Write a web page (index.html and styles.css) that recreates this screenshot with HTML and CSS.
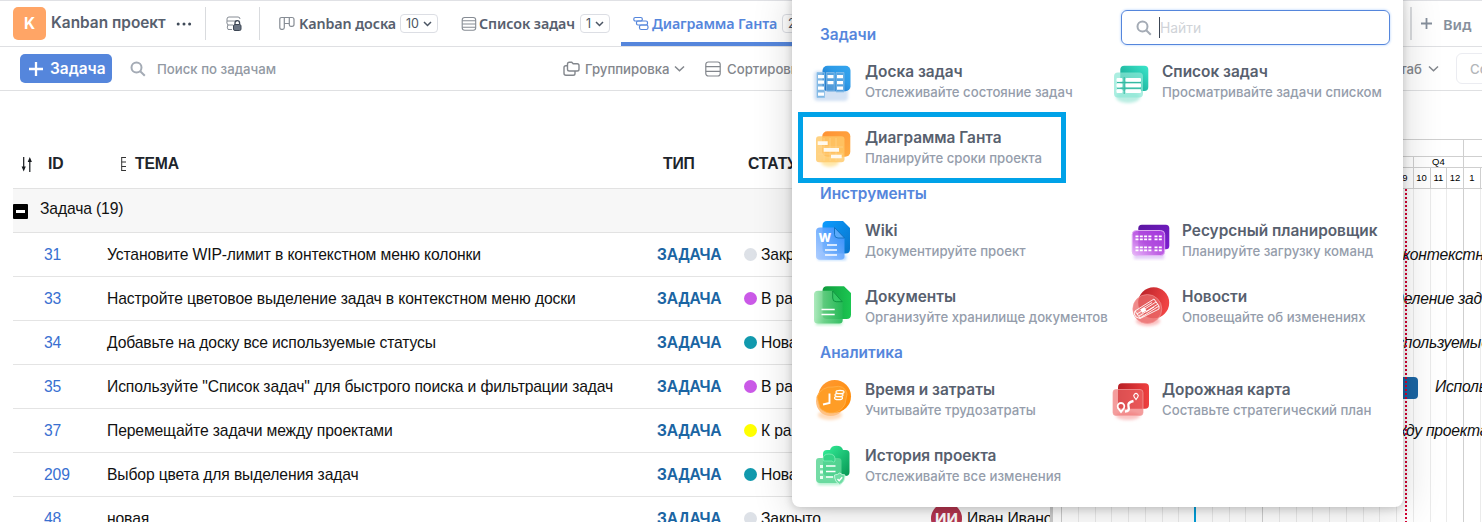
FILE: index.html
```html
<!DOCTYPE html>
<html lang="ru">
<head>
<meta charset="utf-8">
<title>Kanban проект</title>
<link rel="stylesheet" href="styles.css">
</head>
<body>
<div class="app">
  <header class="topbar">
    <div class="project">
      <span class="project-logo">K</span>
      <span class="project-name">Kanban проект</span>
      <svg class="dots" width="16" height="6" viewBox="0 0 16 6"><g fill="#3f4a58"><circle cx="2.2" cy="3" r="1.5"/><circle cx="8" cy="3" r="1.5"/><circle cx="13.6" cy="3" r="1.5"/></g></svg>
    </div>
    <div class="lock">
      <svg width="16" height="16" viewBox="0 0 16 16" fill="none" stroke="#868c94"><path d="M1 5V3q0-2 2-2h9q2 0 2 2M1 5h10M1 5q-.8 2 1 4M1.5 9H7M2 9q-1.500 2 0 4.500H6"/><path d="M9 8.500V7a2.300 2.300 0 0 1 4.600 0v1.500" stroke="#3d4654" stroke-width="1.300"/><rect x="7.500" y="8.500" width="7.500" height="6" rx="1.500" fill="#6b7482" stroke="#3d4654"/></svg>
    </div>
    <nav class="tabs">
      <div class="tab">
        <svg width="16" height="16" viewBox="0 0 16 16" fill="none" stroke="#868c94" stroke-width="1.200"><path d="M2.500 1.500H13q2 0 2 2v5q0 1.800-2 1.800h-1.200q-1.500 0-1.500-1.500V2M5.300 2v9.500q0 1.800-1.700 1.800H2.600q-1.800 0-1.800-1.800V3.200q0-1.700 1.700-1.700M5.300 7.500h5"/></svg>
        <span class="tab-name">Kanban доска</span>
        <span class="badge">10 <svg width="9" height="6" viewBox="0 0 9 6"><path d="M1 1l3.500 3.500L8 1"/></svg></span>
      </div>
      <div class="tab tab-list">
        <svg width="16" height="16" viewBox="0 0 16 16" fill="none" stroke="#868c94" stroke-width="1.100"><rect x="1.200" y="1.500" width="13.500" height="12.800" rx="2.500"/><path d="M1.200 4.800h13.500M1.200 8h13.500M1.200 11.200h13.500"/></svg>
        <span class="tab-name">Список задач</span>
        <span class="badge">1 <svg width="9" height="6" viewBox="0 0 9 6"><path d="M1 1l3.500 3.500L8 1"/></svg></span>
      </div>
      <div class="tab tab-active">
        <svg width="16" height="16" viewBox="0 0 16 16" fill="none" stroke="#5586dc" stroke-width="1.200"><rect x=".8" y="1.500" width="8.500" height="3.500" rx="1.500"/><rect x="3.500" y="5" width="11" height="4" rx="1.500"/><rect x="6.500" y="9" width="8.500" height="4.500" rx="1.800"/></svg>
        <span class="tab-name">Диаграмма Ганта</span>
        <span class="badge">2 <svg width="9" height="6" viewBox="0 0 9 6"><path d="M1 1l3.500 3.500L8 1"/></svg></span>
      </div>
    </nav>
    <div class="add-view">
      <svg width="11" height="11" viewBox="0 0 11 11" stroke="#868f9c" stroke-width="1.800"><path d="M5.500 0v11M0 5.500h11"/></svg>
      <span>Вид</span>
    </div>
  </header>

  <div class="toolbar">
    <button class="new-task"><svg width="16" height="16" viewBox="0 0 16 16" stroke="#fff" stroke-width="2.300"><path d="M8 1v14M1 8h14"/></svg>Задача</button>
    <svg class="glass" width="16" height="16" viewBox="0 0 16 16" fill="none" stroke="#a4abb5" stroke-width="2"><circle cx="6.500" cy="6.500" r="5"/><path d="M10.200 10.200l4.600 4.600"/></svg>
    <span class="search-label">Поиск по задачам</span>
    <div class="tool tool-group">
      <svg width="17" height="16" viewBox="0 0 17 16" fill="none" stroke="#83878d" stroke-width="1.400"><path d="M4.500 3q0-1.800 1.800-1.800h2.400l1.500 1.600h4q1.800 0 1.800 1.800V8.200q0 1.800-1.800 1.800H6.300q-1.800 0-1.800-1.800zM4 4.700H2.800Q1 4.700 1 6.500v5.800q0 2 2 2h7.200q1.800 0 1.800-1.800V10.500"/></svg>
      <span>Группировка</span>
      <svg width="11" height="8" viewBox="0 0 11 8" fill="none" stroke="#83878d" stroke-width="1.500"><path d="M1 1.500l4.500 4.300L10 1.500"/></svg>
    </div>
    <div class="tool tool-sort">
      <svg width="16" height="16" viewBox="0 0 16 16" fill="none" stroke="#83878d" stroke-width="1.200"><rect x=".8" y="1" width="14.400" height="14" rx="2.500"/><path d="M.8 5.700h14.400M.8 10.300h14.400"/></svg>
      <span>Сортировка</span>
    </div>
    <div class="tool tool-scale">
      <span>Масштаб</span>
      <svg width="11" height="8" viewBox="0 0 11 8" fill="none" stroke="#83878d" stroke-width="1.500"><path d="M1 1.500l4.500 4.300L10 1.500"/></svg>
    </div>
    <button class="save">Сохранить</button>
  </div>

  <main class="content">
    <section class="table">
      <div class="thead">
        <svg class="sort" width="12" height="17" viewBox="0 0 12 17" stroke="#16191d" fill="#16191d"><path d="M2.700 1v11M8.800 16V5" stroke-width="1.200"/><path d="M.6 10.500h4.200L2.700 15.500zM6.700 6h4.200L8.800 1z" stroke="none"/></svg>
        <span class="h-id">ID</span>
        <svg class="drag" width="5" height="16" viewBox="0 0 5 16" fill="none" stroke="#333"><path d="M.7 1v14M.7 1.500H5M.7 6H5M.7 10.500H5M.7 14.500H5"/></svg>
        <span class="h-subject">ТЕМА</span>
        <span class="h-type">ТИП</span>
        <span class="h-status">СТАТУС</span>
      </div>
      <div class="group"><span class="collapse"></span>Задача (19)</div>
      <div class="row"><a>31</a><span>Установите WIP-лимит в контекстном меню колонки</span><b>ЗАДАЧА</b><i class="dot closed"></i><em>Закрыто</em></div>
      <div class="row"><a>33</a><span>Настройте цветовое выделение задач в контекстном меню доски</span><b>ЗАДАЧА</b><i class="dot work"></i><em>В работе</em></div>
      <div class="row"><a>34</a><span>Добавьте на доску все используемые статусы</span><b>ЗАДАЧА</b><i class="dot new"></i><em>Новая</em></div>
      <div class="row"><a>35</a><span>Используйте "Список задач" для быстрого поиска и фильтрации задач</span><b>ЗАДАЧА</b><i class="dot work"></i><em>В работе</em></div>
      <div class="row"><a>37</a><span>Перемещайте задачи между проектами</span><b>ЗАДАЧА</b><i class="dot ready"></i><em>К работе</em></div>
      <div class="row"><a>209</a><span>Выбор цвета для выделения задач</span><b>ЗАДАЧА</b><i class="dot new"></i><em>Новая</em></div>
      <div class="row"><a>48</a><span>новая</span><b>ЗАДАЧА</b><i class="dot closed"></i><em>Закрыто</em><span class="avatar">ИИ</span><span class="person">Иван Иванов</span></div>
    </section>
    <div class="splitter"></div>
    <section class="gantt">
      <div class="years"><span></span><span></span><span></span></div>
      <div class="quarters"><span>Q1</span><span>Q2</span><span>Q3</span><span>Q4</span><span>Q1</span><span>Q2</span><span>Q3</span><span>Q4</span><span>Q1</span></div>
      <div class="months"><span>1</span><span>2</span><span>3</span><span>4</span><span>5</span><span>6</span><span>7</span><span>8</span><span>9</span><span>10</span><span>11</span><span>12</span><span>1</span><span>2</span><span>3</span><span>4</span><span>5</span><span>6</span><span>7</span><span>8</span><span>9</span><span>10</span><span>11</span><span>12</span><span>1</span><span>2</span></div>
      <div class="chart">
        <div class="lines"><i></i><i></i><i></i><i></i><i></i><i></i><i></i><i></i><i></i><i></i><i></i><i class="year"></i><i></i><i></i><i></i><i></i><i></i><i></i><i></i><i></i><i></i><i></i><i></i><i class="year"></i><i></i><i></i></div>
        <div class="label label-31">Установите WIP-лимит в контекстном меню колонки</div>
        <div class="label label-33">Настройте цветовое выделение задач</div>
        <div class="label label-34">Добавьте на доску все используемые статусы</div>
        <div class="label label-35"><span class="bar"></span>Используйте "Список задач"</div>
        <div class="label label-37">Перемещайте задачи между проектами</div>
        <div class="start-line"></div>
        <div class="today"></div>
      </div>
    </section>
  </main>

  <aside class="menu">
    <div class="menu-head">
      <h2>Задачи</h2>
      <div class="find">
        <svg width="16" height="16" viewBox="0 0 16 16" fill="none" stroke="#a4abb5" stroke-width="2"><circle cx="6.500" cy="6.500" r="5"/><path d="M10.200 10.200l4.600 4.600"/></svg>
        <span class="caret"></span><span class="hint">Найти</span>
      </div>
    </div>
    <div class="items">
      <div class="item">
        <svg width="48" height="48" viewBox="0 0 48 48">
          <defs><filter id="soft" x="-30%" y="-30%" width="160%" height="160%"><feGaussianBlur stdDeviation="1.800"/></filter>
          <linearGradient id="gb" x1="0" y1="1" x2="1" y2="0"><stop offset="0" stop-color="#1260b8"/><stop offset=".6" stop-color="#2d9be8"/><stop offset="1" stop-color="#35a5ee"/></linearGradient></defs>
          <rect x="4" y="13" width="34" height="30" rx="4" fill="#d3e2f4" filter="url(#soft)"/>
          <rect x="12.500" y="7.700" width="28" height="25.600" rx="5" fill="url(#gb)"/>
          <g fill="#64a8df" fill-opacity=".75" stroke="#8cc0ea" stroke-width=".7"><path d="M7 14.500h7.500v25H7zM16.300 14.500h8v18.500h-8zM26 14.500h8V34h-8z"/></g>
          <g fill="#fff"><path d="M8 17h6v3.300H8zM8 22.500h6v3.300H8zM8 28.500h6v3.300H8zM8 34.500h6v3.300H8zM17.500 17h6v3.300h-6zM17.500 23h6v3.300h-6zM27 17h6v3.300h-6zM27 23h6v3.300h-6zM27 28.500h6v3.300h-6z"/></g>
        </svg>
        <div><h3>Доска задач</h3><p>Отслеживайте состояние задач</p></div>
      </div>
      <div class="item">
        <svg width="48" height="48" viewBox="0 0 48 48">
          <defs><linearGradient id="gl" x1="0" y1="1" x2="1" y2="0"><stop offset="0" stop-color="#0f9a86"/><stop offset="1" stop-color="#3be6cb"/></linearGradient></defs>
          <ellipse cx="21" cy="39" rx="12" ry="6" fill="#b9ede2" filter="url(#soft)"/>
          <rect x="13.300" y="7.700" width="28" height="25.300" rx="4" fill="url(#gl)"/>
          <rect x="7" y="14.500" width="29" height="25" rx="4" fill="#8ce8d5" fill-opacity=".72"/>
          <path d="M17.200 19v17M10 24.500h24M10 30.300h24" stroke="#35b8a2" stroke-width="1"/>
          <g fill="#fff"><rect x="9.500" y="20" width="6" height="3.800" rx="1"/><rect x="18.500" y="20" width="15.500" height="3.800" rx="1"/><rect x="9.500" y="25.500" width="6" height="3.800" rx="1"/><rect x="18.500" y="25.500" width="15.500" height="3.800" rx="1"/><rect x="9.500" y="31.300" width="6" height="3.800" rx="1"/><rect x="18.500" y="31.300" width="15.500" height="3.800" rx="1"/></g>
        </svg>
        <div><h3>Список задач</h3><p>Просматривайте задачи списком</p></div>
      </div>
      <div class="item selected">
        <svg width="48" height="48" viewBox="0 0 48 48">
          <defs><linearGradient id="gg" x1="0" y1="0" x2="1" y2="1"><stop offset="0" stop-color="#ff9233"/><stop offset="1" stop-color="#ffad45"/></linearGradient></defs>
          <ellipse cx="20" cy="38" rx="9" ry="5" fill="#ffe7a8" filter="url(#soft)"/>
          <rect x="12.300" y="7.300" width="28" height="25.500" rx="5" fill="url(#gg)"/>
          <rect x="6" y="12.300" width="28.500" height="26" rx="3" fill="#ffc868" fill-opacity=".82"/>
          <path d="M14 14v23M20 14v23M26 14v23M8 23h25M8 30h25" stroke="#ffd896" stroke-width=".6"/>
          <g fill="#fff9ee"><path d="M7.700 17.300h10V21h-10zM13.700 24H29v3.700H13.700zM21 30.700h10.700v3.600H21z"/></g>
        </svg>
        <div><h3>Диаграмма Ганта</h3><p>Планируйте сроки проекта</p></div>
      </div>
    </div>
    <h2>Инструменты</h2>
    <div class="items items-tools">
      <div class="item">
        <svg width="48" height="48" viewBox="0 0 48 48">
          <defs><linearGradient id="gw" x1="0" y1="0" x2="1" y2="1"><stop offset="0" stop-color="#0c9cff"/><stop offset="1" stop-color="#0873c9"/></linearGradient><linearGradient id="gw2" x1="0" y1="1" x2="1" y2="0"><stop offset="0" stop-color="#a9caff"/><stop offset="1" stop-color="#2f8cff"/></linearGradient></defs>
          <path d="M8 38h28v5H8z" fill="#a9d2ff" filter="url(#soft)"/>
          <path d="M17 4h16l7 7v21q0 4.500-4.500 4.500H17q-4.500 0-4.500-4.500V8.500Q12.500 4 17 4z" fill="url(#gw)"/>
          <path d="M10 10.500h14.500L34.500 21v18q0 3.800-4 3.800H10q-4 0-4-3.800V14.500q0-4 4-4z" fill="url(#gw2)" fill-opacity=".9"/>
          <path d="M24.500 10.500v7q0 3.500 3.500 3.500h6.500z" fill="#5aaafa" stroke="#0867b5" stroke-width=".8"/>
          <text x="8.500" y="25" font-family="Inter, sans-serif" font-size="12" font-weight="800" fill="#fff">W</text>
          <path d="M17 28h10M15 33h12M15 38h12" stroke="#fff" stroke-width="1.700"/>
        </svg>
        <div><h3>Wiki</h3><p>Документируйте проект</p></div>
      </div>
      <div class="item">
        <svg width="48" height="48" viewBox="0 0 48 48">
          <defs><linearGradient id="gr" x1="0" y1="0" x2="1" y2="1"><stop offset="0" stop-color="#5b16a0"/><stop offset="1" stop-color="#7d1ed2"/></linearGradient><linearGradient id="gr2" x1="0" y1="1" x2="1" y2="0"><stop offset="0" stop-color="#e9b4fa"/><stop offset=".45" stop-color="#ba55e2"/><stop offset="1" stop-color="#a638df"/></linearGradient></defs>
          <path d="M7 36h30v6H7z" fill="#e3cdf8" filter="url(#soft)"/>
          <rect x="11.300" y="7.700" width="31" height="24.500" rx="3.500" fill="url(#gr)"/>
          <rect x="5.200" y="13.500" width="32.500" height="25" rx="4" fill="url(#gr2)" fill-opacity=".92" stroke="#e3b5f5" stroke-width=".9"/>
          <path d="M8.500 19.300h16M27.500 19.300h8M8.500 22.300h16M27.500 22.300h8M8.500 30.300h16M27.500 30.300h8M8.500 33.300h16M27.500 33.300h8" stroke="#fff" stroke-width="1.700" stroke-dasharray="3 1.300"/>
        </svg>
        <div><h3>Ресурсный планировщик</h3><p>Планируйте загрузку команд</p></div>
      </div>
      <div class="item">
        <svg width="48" height="48" viewBox="0 0 48 48">
          <defs><linearGradient id="gd" x1="0" y1="0" x2="1" y2="0"><stop offset="0" stop-color="#0f9a3d"/><stop offset="1" stop-color="#1cc651"/></linearGradient><linearGradient id="gd2" x1="0" y1="0" x2="1" y2="0"><stop offset="0" stop-color="#a5e8b6"/><stop offset=".35" stop-color="#65cf83"/><stop offset="1" stop-color="#25b956"/></linearGradient></defs>
          <path d="M6 36h26v6H6z" fill="#b3efc5" filter="url(#soft)"/>
          <path d="M17 3.300h17L41 10v21.500q0 4.500-4.500 4.500H17q-4.500 0-4.500-4.500V8q0-4.700 4.500-4.700z" fill="url(#gd)"/>
          <path d="M8 7.700h14.700l10 11V37q0 3.500-3.500 3.500H8q-4 0-4-3.500V11.500q0-3.800 4-3.800z" fill="url(#gd2)" fill-opacity=".9"/>
          <path d="M22.700 8v7q0 3.700 3.500 3.700h6z" fill="#35c965" stroke="#078838" stroke-width=".8"/>
          <path d="M11.500 26.500h13.200M11.500 31.500h13.200" stroke="#fff" stroke-width="1.700"/>
        </svg>
        <div><h3>Документы</h3><p>Организуйте хранилище документов</p></div>
      </div>
      <div class="item">
        <svg width="48" height="48" viewBox="0 0 48 48">
          <defs><linearGradient id="gn" x1="0" y1="0" x2="1" y2=".3"><stop offset="0" stop-color="#b51f27"/><stop offset="1" stop-color="#f04444"/></linearGradient></defs>
          <ellipse cx="21" cy="38" rx="12" ry="5" fill="#fbc0c0" filter="url(#soft)"/>
          <circle cx="26.700" cy="19.700" r="15.500" fill="url(#gn)"/>
          <circle cx="20.300" cy="26" r="14.500" fill="#ea6a6a" fill-opacity=".78" stroke="#f39a9a" stroke-width=".6"/>
          <g fill="none" stroke="#fff" stroke-width=".9"><path d="M8 28l19-12 5 7-19 12zM8 28q-2 3 1 6l4 1.500L32 26v-3M10 31l19-12M12 33l19-12M17 24.500l8-5M19 29l8-5"/></g>
          <path d="M13 26.500l4-2.500 2.500 3.500-4 2.500z" fill="#fff"/>
        </svg>
        <div><h3>Новости</h3><p>Оповещайте об изменениях</p></div>
      </div>
    </div>
    <h2>Аналитика</h2>
    <div class="items">
      <div class="item">
        <svg width="48" height="48" viewBox="0 0 48 48">
          <defs><linearGradient id="gt" x1="0" y1="0" x2="1" y2="1"><stop offset="0" stop-color="#ff9a35"/><stop offset="1" stop-color="#ff8a00"/></linearGradient></defs>
          <ellipse cx="20" cy="39" rx="12" ry="5" fill="#ffdcbc" filter="url(#soft)"/>
          <circle cx="20.700" cy="25.300" r="14.700" fill="#ffc184"/>
          <circle cx="24.700" cy="20.300" r="16.300" fill="url(#gt)"/>
          <path d="M7 21a15 15 0 0 1 16-10q12-3 14 7-1 5-2 10a15 15 0 0 1-25 4z" fill="#ff9d26" stroke="#ffb34e" stroke-width=".8"/>
          <path d="M19.500 17.500V27L13 28.500" fill="none" stroke="#fff" stroke-width="1.900"/>
          <g fill="#ffa52e" stroke="#fff" stroke-width="1.200"><ellipse cx="28.500" cy="22" rx="4" ry="1.700"/><ellipse cx="29" cy="19" rx="4" ry="1.700"/><ellipse cx="30" cy="16" rx="4" ry="1.700"/></g>
        </svg>
        <div><h3>Время и затраты</h3><p>Учитывайте трудозатраты</p></div>
      </div>
      <div class="item">
        <svg width="48" height="48" viewBox="0 0 48 48">
          <defs><linearGradient id="gm" x1="0" y1="0" x2="1" y2="0"><stop offset="0" stop-color="#b71f24"/><stop offset="1" stop-color="#ef4040"/></linearGradient></defs>
          <ellipse cx="21" cy="40" rx="12" ry="4" fill="#fac4c4" filter="url(#soft)"/>
          <rect x="11" y="7.300" width="31" height="25.500" rx="4" fill="url(#gm)"/>
          <rect x="6" y="13.500" width="30" height="26" rx="3" fill="#ee6868" fill-opacity=".65" stroke="#f3a0a0" stroke-width=".7"/>
          <g fill="none" stroke="#fff"><path d="M14 36l-3-4a3.400 3.400 0 1 1 6 0z" stroke-width="1.800"/><path d="M29 23.500l-1.800-2.500a2.200 2.200 0 1 1 3.600 0z" stroke-width="1.200"/><path d="M18 35.500q5 0 3.500-5-1.500-4 5-5.500" stroke-width="2.400"/></g>
        </svg>
        <div><h3>Дорожная карта</h3><p>Составьте стратегический план</p></div>
      </div>
      <div class="item">
        <svg width="48" height="48" viewBox="0 0 48 48">
          <defs><linearGradient id="gh" x1="0" y1="0" x2="1" y2="1"><stop offset="0" stop-color="#35f29b"/><stop offset="1" stop-color="#079653"/></linearGradient></defs>
          <path d="M8 37h22v6H8z" fill="#aef0cc" filter="url(#soft)"/>
          <path d="M17 8h3q1-4.300 6.500-4.300T33 8h3q3.500 0 3.500 3.500V30q0 4-4 4H17q-4 0-4-4V12q0-4 4-4z" fill="url(#gh)"/>
          <path d="M9 16h4q0-4 6-4t6 4h3q3.500 0 3.500 3v18q0 4-4 4H10q-4 0-4-4V19q0-3 3-3z" fill="#5dd696" fill-opacity=".85"/>
          <path d="M13 17q0-5 6-5t6 5-3 2h-6q-3 1-3-2z" fill="#35d487" stroke="#8cf0bd" stroke-width=".7"/>
          <g fill="#e9fff3"><path d="M10 23h3v3h-3zM10 28.500h3v3h-3zM10 34h3v3h-3z"/></g>
          <path d="M16 24h9.500M16 29.500h9.500M16 35h7" stroke="#fff" stroke-width="1.500"/>
          <path d="M24.500 33q3 0 5.300-2 2.200 2 5.200 2 0 7-5.200 9.500-5.300-2.500-5.300-9.500z" fill="#6fdda4" stroke="#c5f6dc"/>
          <path d="M27.500 37l1.700 1.800 3-3.600" fill="none" stroke="#fff" stroke-width="1.400"/>
        </svg>
        <div><h3>История проекта</h3><p>Отслеживайте все изменения</p></div>
      </div>
    </div>
  </aside>
</div>
</body>
</html>
```
FILE: styles.css
```css
*, *::after { box-sizing: border-box; }
body { margin: 0; font-family: Inter, "Liberation Sans", sans-serif; background: #fff; }
h2, h3, p { margin: 0; }
svg { flex: none; display: block; }
.app { position: relative; width: 1482px; height: 522px; overflow: hidden; }

.topbar { display: flex; height: 47px; border-top: 1px solid #e0e1e5; border-bottom: 1px solid #dfe0e3; white-space: nowrap; }
.project { display: flex; align-items: center; width: 206px; height: 33px; margin-top: 6px; padding-left: 13px; border-right: 1px solid #d9dbde; }
.project-logo { width: 33px; height: 33px; border-radius: 5px; background: #ffa566; color: #fff; font-size: 15.400px; font-weight: 700; line-height: 33px; text-align: center; }
.project-name { width: 125px; margin: -2px 0 0 5px; font-size: 15.400px; font-weight: 600; color: #57606e; }
.lock { width: 54px; height: 33px; margin-top: 6px; padding: 9px 0 0 20px; border-right: 1px solid #d9dbde; }
.tabs { display: flex; height: 45px; }
.tab { display: flex; align-items: center; width: 182px; padding-left: 19px; color: #57606e; }
.tab-name { flex: none; width: 97px; margin-left: 4px; font-family: "Noto Sans", sans-serif; font-size: 14.300px; font-weight: 600; letter-spacing: -.1px; }
.tab-list { width: 179px; }
.tab-list .tab-name { margin-left: 2px; }
.tab-active { width: 190px; padding-left: 12px; color: #5586dc; border-bottom: 4px solid #5586dc; padding-top: 4px; }
.tab-active .tab-name { width: 126px; margin-left: 3px; letter-spacing: -.15px; }
.badge { display: flex; align-items: center; gap: 4px; height: 19px; margin-left: 4px; padding: 0 5px; border: 1px solid #dcdee4; border-radius: 4px; font-size: 12.500px; color: #4b5563; }
.badge path { fill: none; stroke: #4b5563; stroke-width: 1.500; }
.add-view { display: flex; align-items: center; gap: 11px; width: 72px; height: 33px; margin: 6px 0 0 auto; padding-left: 9px; border-left: 2px solid #d9dbde; font-family: "Noto Sans", sans-serif; font-size: 14.600px; font-weight: 600; color: #868f9c; }

.toolbar { display: flex; align-items: center; height: 44px; padding-left: 20px; border-bottom: 1px solid #dfe0e2; font-size: 13.200px; font-weight: 500; white-space: nowrap; }
.new-task { display: flex; align-items: center; gap: 6px; width: 92px; height: 29px; padding: 0 0 0 8px; border: 0; border-radius: 5px; background: #5586dc; color: #fff; font: 600 15.400px Inter, sans-serif; }
.glass { margin-left: 18px; }
.search-label { width: 406px; margin-left: 11px; color: #9299a3; }
.tool { display: flex; align-items: center; color: #83868c; }
.tool-group { width: 142px; }
.tool-group span { width: 84px; margin: 0 5px; }
.tool-sort { gap: 6px; width: 120px; }
.tool-scale { gap: 6px; margin-left: auto; }
.save { width: 120px; height: 31px; margin: 0 -94px 0 17px; padding: 0 0 0 13px; border: 1px solid #ebecf1; border-radius: 6px; background: #fff; color: #b3b6ba; font: 500 13.200px Inter, sans-serif; text-align: left; }

.content { display: flex; height: 431px; font-family: "Liberation Sans", Arial, sans-serif; font-size: 15.700px; line-height: 18px; letter-spacing: -.14px; color: #111; }
.table { width: 1037px; margin-left: 13px; overflow: hidden; white-space: nowrap; }
.thead { display: flex; align-items: center; height: 98px; padding: 49px 0 0 8px; border-bottom: 1px solid #e2e2e2; color: #20242b; font-weight: 700; }
.h-id { width: 73px; margin-left: 15px; }
.drag { margin-right: 9px; }
.h-subject { width: 528px; }
.h-type { width: 85px; }
.group { display: flex; align-items: center; height: 44px; padding-bottom: 3px; background: #f7f7f7; border-bottom: 1px solid #e2e2e2; }
.collapse { width: 15px; height: 15px; margin: 4px 12px 0 0; border: solid #000; border-width: 6px 3px; background: #fff; border-radius: 1px; }
.row { display: flex; align-items: center; height: 44px; padding-left: 31px; border-bottom: 1px solid #e4e4e4; }
.row > * { flex: none; }
.row a { width: 63px; color: #3970d1; }
.row > a + span { width: 550px; }
.row b { width: 87px; color: #1b65a3; }
.row em { width: 170px; font-style: normal; }
.dot { width: 13px; height: 13px; margin-right: 4px; border-radius: 50%; }
.closed { background: #dde1e7; }
.work { background: #ca59e7; }
.new { background: #1199ad; }
.ready { background: #ffff00; }
.avatar { width: 31px; height: 31px; border-radius: 50%; background: #b73650; color: #fff; font: 700 15px/31px Inter, sans-serif; letter-spacing: 0; text-align: center; }
.person { margin-left: 5px; }
.splitter { width: 3px; background: #ccc; }

.gantt { flex: 1; min-width: 0; margin-left: 8px; padding-top: 48px; overflow: hidden; border-left: 1px solid #ccc; }
.years, .quarters, .months { display: flex; width: 640px; font-size: 9.500px; letter-spacing: 0; text-align: center; color: #000; }
.years span, .quarters span, .months span { flex: none; border-right: 1px solid #cfcfcf; }
.years { height: 18px; border: solid #cfcfcf; border-width: 1px 0; }
.years span { width: 201px; }
.quarters { height: 11px; border-bottom: 1px solid #cfcfcf; line-height: 10px; }
.quarters span { width: 50.250px; }
.months { height: 21px; border-bottom: 1px solid #cfcfcf; line-height: 20px; }
.months span, .lines i { width: 16.750px; }
.chart { position: relative; height: 333px; padding-top: 44px; font-style: italic; letter-spacing: -.25px; white-space: nowrap; }
.lines { position: absolute; inset: 0; display: flex; }
.lines i { flex: none; border-right: 1px solid #ebebeb; }
.lines .year { border-color: #cfcfcf; }
.label { position: relative; display: flex; align-items: center; height: 44px; }
.label-31 { padding-left: 145px; }
.label-33 { padding-left: 149px; }
.label-34 { padding-left: 156px; }
.label-35 { padding-left: 296px; }
.label-37 { padding-left: 152px; }
.bar { flex: none; width: 60px; height: 22px; margin: 2px 17px 0 0; border-radius: 4px; background: #1b65a3; }
.start-line { position: absolute; top: 0; left: 132px; width: 2px; height: 340px; background: #009fda; }
.today { position: absolute; top: 0; left: 343px; width: 2px; height: 340px; background: repeating-linear-gradient(#d50032 0 2px, transparent 2px 4px); }

.menu { position: absolute; top: -10px; left: 792px; width: 611px; height: 517px; padding-top: 20px; border-radius: 8px; background: #fff; box-shadow: 0 2px 8px rgba(0,0,0,.18), 0 4px 40px rgba(0,0,0,.16); white-space: nowrap; }
.menu h2 { height: 27px; padding-left: 28px; font-size: 15.400px; line-height: 25px; font-weight: 600; color: #5586dc; }
.menu-head { display: flex; align-items: flex-end; justify-content: space-between; height: 39px; padding-right: 13px; }
.find { display: flex; align-items: center; align-self: flex-start; width: 269px; height: 35px; padding-left: 14px; border: 1px solid #5586dc; border-radius: 6px; box-shadow: 0 0 2px 1px #d8e8ff; font-size: 13.900px; color: #d0d3d8; }
.caret { width: 1px; height: 21px; margin-left: 7px; background: #3c4655; }
.items { display: grid; grid-template-columns: 297px 300px; grid-auto-rows: 66px; padding-left: 18px; }
.items-tools { grid-template-columns: 317px 280px; }
.item { position: relative; display: flex; align-items: center; gap: 7px; }
.item h3 { font-size: 15.400px; line-height: 20px; font-weight: 600; color: #57606e; }
.item p { font-size: 13.200px; line-height: 20px; font-weight: 500; color: #959dab; }
.selected::after { content: ""; position: absolute; left: -12px; top: -3px; width: 268px; height: 71px; border: 5px solid #00a2e8; }
```
